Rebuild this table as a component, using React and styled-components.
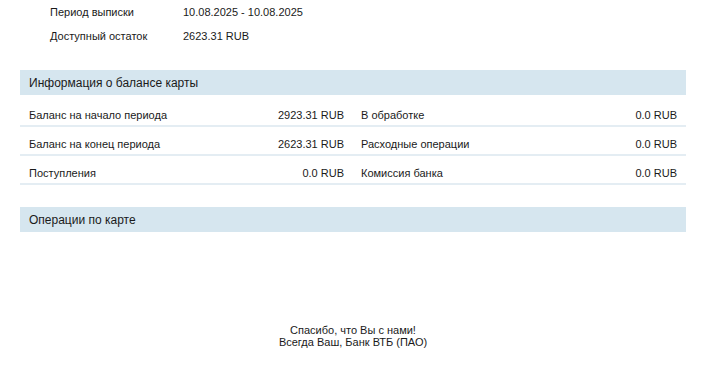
import { Fragment } from "react";
import styled, { createGlobalStyle } from "styled-components";

const GlobalStyle = createGlobalStyle`
  body {
    margin: 0;
    background: #ffffff;
    font-family: "Liberation Sans", Arial, sans-serif;
    color: #1a1a1a;
  }
`;

const Page = styled.div`
  width: 707px;
  padding: 0 21px 0 20px;
  box-sizing: border-box;
`;

const Summary = styled.div`
  display: grid;
  grid-template-columns: 133px 1fr;
  padding-left: 30px;
  font-size: 11px;
  line-height: 24px;
`;

const SectionTitle = styled.div`
  margin-top: ${({ $top }) => $top}px;
  height: 25px;
  padding-left: 9px;
  display: flex;
  align-items: center;
  background: #d6e6ef;
  font-size: 12px;
`;

const BalanceGrid = styled.div`
  display: grid;
  grid-template-columns: 1fr 1fr;
  margin-top: 3px;
`;

const BalanceRow = styled.div`
  display: flex;
  justify-content: space-between;
  padding: 11px 9px 3px ${({ $right }) => ($right ? 8 : 9)}px;
  line-height: 13px;
  font-size: 11px;
  border-bottom: 2px solid #e4edf3;
`;

const Footer = styled.div`
  margin-top: 92px;
  text-align: center;
  font-size: 11px;
  line-height: 12px;
`;

const rows = [
  ["Баланс на начало периода", "2923.31 RUB", "В обработке", "0.0 RUB"],
  ["Баланс на конец периода", "2623.31 RUB", "Расходные операции", "0.0 RUB"],
  ["Поступления", "0.0 RUB", "Комиссия банка", "0.0 RUB"],
];

export default function App() {
  return (
    <>
      <GlobalStyle />
      <Page>
        <Summary>
          <span>Период выписки</span>
          <span>10.08.2025 - 10.08.2025</span>
          <span>Доступный остаток</span>
          <span>2623.31 RUB</span>
        </Summary>
        <SectionTitle $top={22}>Информация о балансе карты</SectionTitle>
        <BalanceGrid>
          {rows.map(([leftLabel, leftValue, rightLabel, rightValue]) => (
            <Fragment key={leftLabel}>
              <BalanceRow>
                <span>{leftLabel}</span>
                <span>{leftValue}</span>
              </BalanceRow>
              <BalanceRow $right>
                <span>{rightLabel}</span>
                <span>{rightValue}</span>
              </BalanceRow>
            </Fragment>
          ))}
        </BalanceGrid>
        <SectionTitle $top={22}>Операции по карте</SectionTitle>
        <Footer>
          Спасибо, что Вы с нами!
          <br />
          Всегда Ваш, Банк ВТБ (ПАО)
        </Footer>
      </Page>
    </>
  );
}
